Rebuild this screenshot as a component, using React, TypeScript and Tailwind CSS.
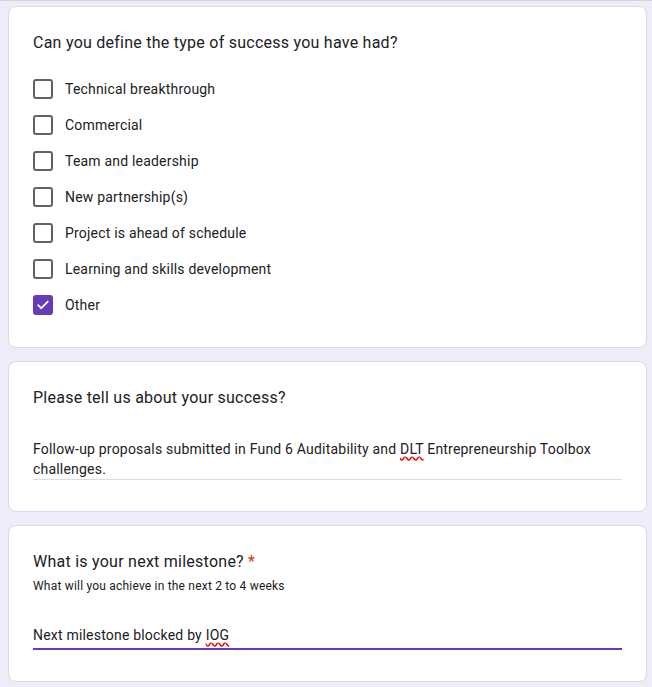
import React from 'react'

const OPTIONS = [
  { label: 'Technical breakthrough', checked: false },
  { label: 'Commercial', checked: false },
  { label: 'Team and leadership', checked: false },
  { label: 'New partnership(s)', checked: false },
  { label: 'Project is ahead of schedule', checked: false },
  { label: 'Learning and skills development', checked: false },
  { label: 'Other', checked: true },
]

function Checkbox({ checked }: { checked: boolean }) {
  if (checked) {
    return (
      <div className="w-[20px] h-[20px] rounded-[3px] bg-[#673ab7] flex items-center justify-center">
        <svg width="14" height="14" viewBox="0 0 24 24" fill="none">
          <path d="M4 12.5l5 5L20 6.5" stroke="white" strokeWidth="3" strokeLinecap="square" />
        </svg>
      </div>
    )
  }
  return <div className="w-[20px] h-[20px] rounded-[3px] border-2 border-[#5f6368]" />
}

function Card({ children }: { children: React.ReactNode }) {
  return (
    <div className="bg-white border border-[#dadce0] rounded-lg px-6 pt-6 pb-6">
      {children}
    </div>
  )
}

function Question({ text, required }: { text: string; required?: boolean }) {
  return (
    <div className="text-[16px] leading-6 tracking-[0.25px] text-[#202124]">
      {text}
      {required && <span className="text-[#d93025] ml-1">*</span>}
    </div>
  )
}

export default function App() {
  return (
    <div className="min-h-[687px] bg-[#f0ebf8]" style={{ fontFamily: 'Roboto, "Liberation Sans", sans-serif' }}>
      <div className="h-px bg-[#d4d2da]" />
      <div className="pl-2 pr-[5px] pt-[5px] flex flex-col gap-[13px]">
        {/* Type of success */}
        <Card>
          <Question text="Can you define the type of success you have had?" />
          <div className="mt-4 flex flex-col">
            {OPTIONS.map(o => (
              <div key={o.label} className="h-9 flex items-center gap-3">
                <Checkbox checked={o.checked} />
                <span className="text-[14px] text-[#202124] tracking-[0.2px]">{o.label}</span>
              </div>
            ))}
          </div>
        </Card>

        {/* Success description */}
        <Card>
          <Question text="Please tell us about your success?" />
          <div className="mt-[29px] mb-[7px] border-b border-[#dadce0] text-[14px] leading-5 text-[#202124] tracking-[0.2px]">
            Follow-up proposals submitted in Fund 6 Auditability and{' '}
            <span className="underline decoration-wavy decoration-[#e00] underline-offset-2">DLT</span>{' '}
            Entrepreneurship Toolbox challenges.
          </div>
        </Card>

        {/* Next milestone */}
        <Card>
          <Question text="What is your next milestone?" required />
          <div className="mt-1 text-[12px] leading-4 text-[#202124] tracking-[0.2px]">
            What will you achieve in the next 2 to 4 weeks
          </div>
          <div className="mt-[31px] mb-[7px] pb-[3px] border-b-2 border-[#673ab7] text-[14px] leading-5 text-[#202124] tracking-[0.2px]">
            Next milestone blocked by{' '}
            <span className="underline decoration-wavy decoration-[#e00] underline-offset-2">IOG</span>
          </div>
        </Card>
      </div>
    </div>
  )
}
